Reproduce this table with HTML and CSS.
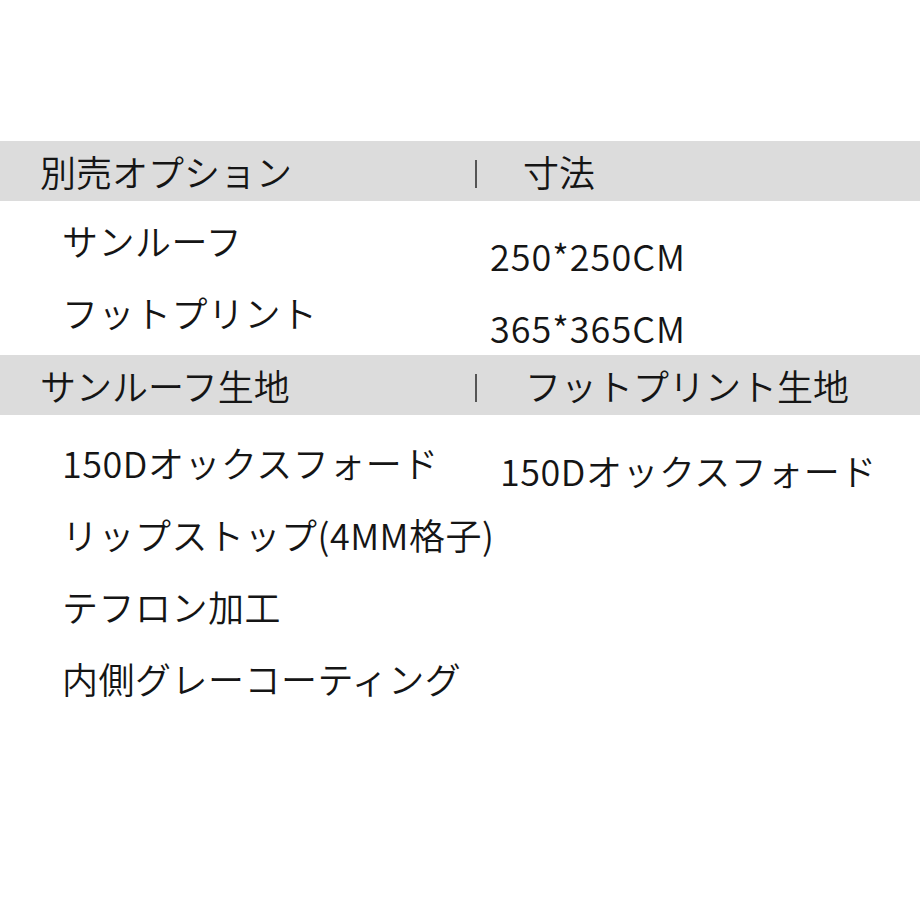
FILE: index.html
```html
<!DOCTYPE html>
<html lang="ja">
<head>
<meta charset="utf-8">
<link rel="stylesheet" href="styles.css">
</head>
<body>
<div class="page">
  <div class="band">
    <div class="hcell left">別売オプション</div>
    <div class="hcell right"><span class="bar"></span><span class="htext">寸法</span></div>
  </div>
  <div class="body body1">
    <ul class="list left-list l1">
      <li>サンルーフ</li>
      <li>フットプリント</li>
    </ul>
    <ul class="list right-list r1">
      <li>250*250CM</li>
      <li>365*365CM</li>
    </ul>
  </div>
  <div class="band">
    <div class="hcell left">サンルーフ生地</div>
    <div class="hcell right"><span class="bar"></span><span class="htext htext2">フットプリント生地</span></div>
  </div>
  <div class="body body2">
    <ul class="list left-list l2">
      <li>150Dオックスフォード</li>
      <li>リップストップ(4MM格子)</li>
      <li>テフロン加工</li>
      <li>内側グレーコーティング</li>
    </ul>
    <ul class="list right-list r2">
      <li>150Dオックスフォード</li>
    </ul>
  </div>
</div>
</body>
</html>
```
FILE: styles.css
```css
html, body {
  margin: 0;
  padding: 0;
  background: #ffffff;
}
.page {
  width: 920px;
  height: 920px;
  padding-top: 141px;
  box-sizing: border-box;
  font-family: "Noto Sans CJK JP", "Noto Sans", sans-serif;
  font-weight: 350;
  color: #151515;
}
.band {
  display: grid;
  grid-template-columns: 475px 1fr;
  height: 60px;
  background: #dcdcdc;
  align-items: center;
}
.hcell {
  font-size: 36px;
  line-height: 60px;
  white-space: nowrap;
}
.hcell.left {
  padding-left: 40px;
}
.hcell.right {
  display: flex;
  align-items: center;
}
.bar {
  display: inline-block;
  width: 2px;
  height: 28px;
  background: #555;
  margin-top: 6px;
}
.htext {
  margin-left: 46px;
}
.htext2 {
  margin-left: 48px;
}
.body {
  display: grid;
  grid-template-columns: 475px 1fr;
  align-items: start;
}
.body1 {
  height: 154px;
}
.body2 {
  height: 350px;
}
.list {
  list-style: none;
  margin: 0;
  padding: 0;
  font-size: 36px;
  letter-spacing: 0.5px;
  white-space: nowrap;
}
.left-list {
  padding-left: 62px;
}
.list li {
  line-height: 72px;
}
.l1 {
  padding-top: 3px;
}
.r1 {
  padding-left: 15px;
  padding-top: 26px;
  display: flex;
  flex-direction: column;
  gap: 16px;
  letter-spacing: 1px;
}
.r1 li {
  line-height: 56px;
}
.l2 {
  padding-top: 11px;
}
.r2 {
  padding-left: 25px;
  padding-top: 19px;
}
```
